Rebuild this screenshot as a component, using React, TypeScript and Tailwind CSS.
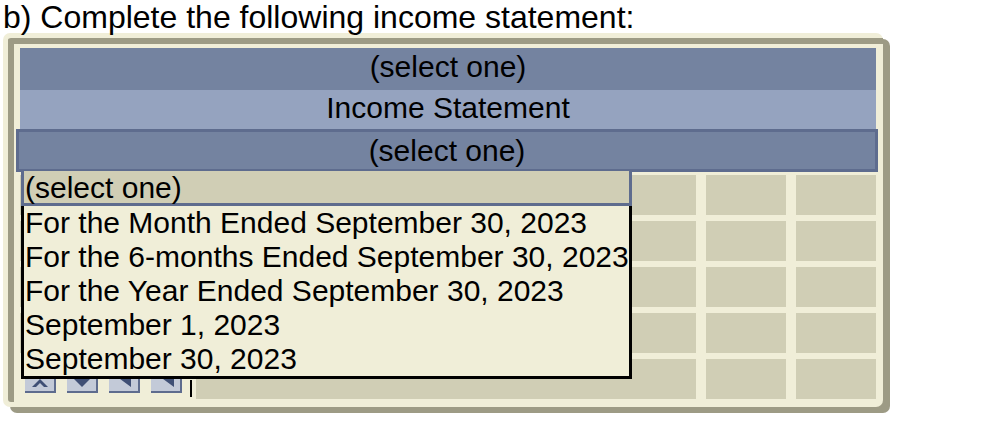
import React from "react";

const options = [
  "For the Month Ended September 30, 2023",
  "For the 6-months Ended September 30, 2023",
  "For the Year Ended September 30, 2023",
  "September 1, 2023",
  "September 30, 2023",
];

function Cell({ wide }: { wide?: boolean }) {
  return <div className={`${wide ? "flex-1" : "w-[80px]"} h-[40px] bg-[#d0ceb5]`} />;
}

function ToolButton({ kind }: { kind: "up" | "down" | "left" | "right" }) {
  return (
    <div className="shrink-0 w-[31px] h-[28px] bg-[#c3cad8] border-r-2 border-b-2 border-[#5e6c8e] flex items-end justify-center pb-[2px]">
      <svg width="22" height="14" viewBox="0 0 22 14" fill="#3f4f75">
        {kind === "up" && <path d="M3 12 L11 4 L19 12 L15 12 L11 8 L7 12 Z" />}
        {kind === "down" && <path d="M2 3 L20 3 L11 12 Z" />}
        {kind === "left" && <path d="M3 1 L6 1 L6 4 L13 4 L13 1 L18 1 L18 12 Z" />}
        {kind === "right" && <path d="M4 1 L9 1 L9 4 L16 4 L16 1 L19 1 L19 12 Z" />}
      </svg>
    </div>
  );
}

export default function App() {
  return (
    <div className="w-[982px] h-[424px] bg-white text-black font-['Liberation_Sans',Arial,sans-serif]">
      <div className="h-[33px] pl-[3px] text-[32px] leading-[35px] whitespace-nowrap">b) Complete the following income statement:</div>

      <div className="ml-[3px] w-[880px] bg-[#f0eed8] rounded-[7px] shadow-[7px_6px_0_#9d9b85] pt-[5px] pb-[5px] pl-[5px]">
        <div className="border-t-[6px] border-l-[6px] border-[#9d9b85] rounded-tl-[3px] rounded-bl-[3px] pt-[4px] pl-[6px] pr-[7px] pb-[3px]">
          <div className="relative">
            <div className="h-[42px] pb-[5px] bg-[#7483a0] flex items-center justify-center text-[30px]">(select one)</div>
            <div className="h-[39px] pb-[4px] bg-[#95a3bf] flex items-center justify-center text-[30px]">Income Statement</div>
            <div className="h-[43px] -ml-[4px] -mr-[2px] bg-[#7483a0] border-[3px] border-[#5e6c8e] flex items-center justify-center text-[30px]">
              (select one)
            </div>

            <div className="mt-[3px] flex flex-col gap-[6px]">
              {[0, 1, 2, 3].map((r) => (
                <div key={r} className="flex gap-[10px]">
                  <Cell wide />
                  <Cell />
                  <Cell />
                </div>
              ))}
              <div className="flex gap-[10px]">
                <div className="shrink-0 w-[166px] h-[40px] flex items-start pt-[6px] pl-[5px] gap-[11px]">
                  <ToolButton kind="up" />
                  <ToolButton kind="down" />
                  <ToolButton kind="left" />
                  <ToolButton kind="right" />
                  <div className="shrink-0 -ml-[3px] mt-[15px] w-[2px] h-[17px] bg-black" />
                </div>
                <Cell wide />
                <Cell />
                <Cell />
              </div>
            </div>

            <div className="absolute left-[1px] top-[123px] w-[611px] text-[30px] leading-[34px]">
              <div className="h-[35px] bg-[#d0ceb5] border-x-[3px] border-b-[3px] border-[#5e6c8e] pl-[1px] leading-[33px]">
                (select one)
              </div>
              <div className="bg-[#f0eed8] border-x-[3px] border-b-[3px] border-black pl-[1px]">
                {options.map((o) => (
                  <div key={o} className="h-[34px] whitespace-nowrap">
                    {o}
                  </div>
                ))}
              </div>
            </div>
          </div>
        </div>
      </div>
    </div>
  );
}
